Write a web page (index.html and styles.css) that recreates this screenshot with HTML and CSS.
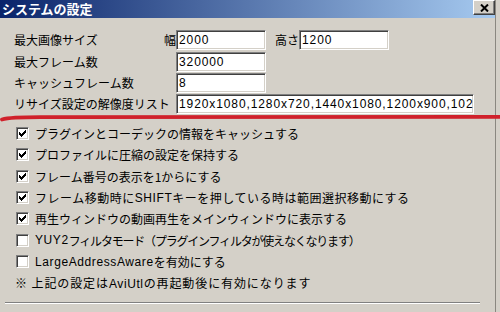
FILE: index.html
```html
<!DOCTYPE html>
<html lang="ja">
<head>
<meta charset="utf-8">
<title>システムの設定</title>
<link rel="stylesheet" href="styles.css">
</head>
<body>
<div class="screen">
  <div class="window">
    <div class="titlebar">
      <span class="title">システムの設定</span>
      <span class="close"><svg width="9" height="8" viewBox="0 0 9 8"><path d="M1 0.5 L8 7.5 M8 0.5 L1 7.5" stroke="#000" stroke-width="2" fill="none"/></svg></span>
    </div>
    <div class="content">
      <div class="fields">
        <div class="row first">
          <span class="label short">最大画像サイズ</span><span class="unit">幅</span><span class="edit">2000</span>
          <span class="unit2">高さ</span><span class="edit">1200</span>
        </div>
        <div class="row"><span class="label">最大フレーム数</span><span class="edit">320000</span></div>
        <div class="row"><span class="label">キャッシュフレーム数</span><span class="edit">8</span></div>
        <div class="row"><span class="label">リサイズ設定の解像度リスト</span><span class="edit wide">1920x1080,1280x720,1440x1080,1200x900,1024x768</span></div>
      </div>
      <ul class="checks">
        <li class="check on"><span class="box"><svg width="13" height="13" viewBox="0 0 13 13"><path d="M3 5H4V6H5V7H6V6H7V5H8V4H9V3H10V6H9V7H8V8H7V9H6V10H5V9H4V8H3Z" fill="#000"/></svg></span>プラグインとコーデックの情報をキャッシュする</li>
        <li class="check on"><span class="box"><svg width="13" height="13" viewBox="0 0 13 13"><path d="M3 5H4V6H5V7H6V6H7V5H8V4H9V3H10V6H9V7H8V8H7V9H6V10H5V9H4V8H3Z" fill="#000"/></svg></span>プロファイルに圧縮の設定を保持する</li>
        <li class="check on"><span class="box"><svg width="13" height="13" viewBox="0 0 13 13"><path d="M3 5H4V6H5V7H6V6H7V5H8V4H9V3H10V6H9V7H8V8H7V9H6V10H5V9H4V8H3Z" fill="#000"/></svg></span>フレーム番号の表示を1からにする</li>
        <li class="check on wide-text"><span class="box"><svg width="13" height="13" viewBox="0 0 13 13"><path d="M3 5H4V6H5V7H6V6H7V5H8V4H9V3H10V6H9V7H8V8H7V9H6V10H5V9H4V8H3Z" fill="#000"/></svg></span>フレーム移動時に<span class="lat">SHIFT</span>キーを押している時は範囲選択移動にする</li>
        <li class="check on"><span class="box"><svg width="13" height="13" viewBox="0 0 13 13"><path d="M3 5H4V6H5V7H6V6H7V5H8V4H9V3H10V6H9V7H8V8H7V9H6V10H5V9H4V8H3Z" fill="#000"/></svg></span>再生ウィンドウの動画再生をメインウィンドウに表示する</li>
        <li class="check narrow-text"><span class="box"></span><span class="lat">YUY2</span>フィルタモード（プラグインフィルタが使えなくなります）</li>
        <li class="check"><span class="box"></span><span class="lat">LargeAddressAware</span>を有効にする</li>
      </ul>
      <p class="note">※ 上記の設定は<span class="lat">AviUtl</span>の再起動後に有効になります</p>
      <div class="separator"></div>
    </div>
  </div>
  <svg class="redline" width="500" height="312" viewBox="0 0 500 312"><path d="M2 119.5 C 8 117.8, 20 117.2, 40 117.2 L 500 116.8" stroke="#d0212b" stroke-width="3.8" fill="none" stroke-linecap="round"/></svg>
</div>
</body>
</html>
```
FILE: styles.css
```css
html, body {
  margin: 0;
  padding: 0;
}
body {
  background: #d4d0c8;
  font-family: "Noto Sans CJK JP", "Liberation Sans", sans-serif;
  font-size: 12px;
  color: #000;
}
.screen {
  position: relative;
  width: 500px;
  height: 312px;
  overflow: hidden;
}
.window {
  width: 495px;
  height: 312px;
  background: #d4d0c8;
  border-right: 1px solid #8a8780;
}
.titlebar {
  height: 18px;
  background: linear-gradient(to right, #0a246a, #a6caf0);
  display: flex;
  justify-content: space-between;
  align-items: flex-start;
}
.title {
  color: #fff;
  font-weight: 700;
  font-size: 13px;
  line-height: 18px;
  padding-left: 2px;
}
.close {
  width: 22px;
  height: 15px;
  box-sizing: border-box;
  background: #d4d0c8;
  border: 1px solid;
  border-color: #fff #404040 #404040 #fff;
  box-shadow: inset -1px -1px #808080;
  display: flex;
  align-items: center;
  justify-content: center;
}
.close svg {
  display: block;
}
.content {
  padding: 12px 0 0 14px;
}
.row {
  display: flex;
  align-items: flex-start;
  height: 21px;
}
.row.first {
  height: 22px;
}
.label {
  width: 162px;
  line-height: 20px;
  white-space: nowrap;
}
.label.short {
  width: 148px;
}
.unit {
  width: 14px;
  text-align: right;
  line-height: 20px;
}
.unit2 {
  margin-left: 9px;
  width: 24px;
  line-height: 20px;
}
.edit {
  width: 90px;
  height: 20px;
  box-sizing: border-box;
  background: #fff;
  border: 1px solid;
  border-color: #808080 #fff #fff #808080;
  box-shadow: inset 1px 1px #404040, inset -1px -1px #d4d0c8;
  padding-left: 2px;
  font-family: "Liberation Sans", sans-serif;
  font-size: 12px;
  letter-spacing: 0.9px;
  line-height: 18px;
  white-space: nowrap;
  overflow: hidden;
}
.edit.wide {
  width: 298px;
}
.checks {
  list-style: none;
  margin: 8px 0 0 0;
  padding: 0;
}
.check {
  display: flex;
  align-items: center;
  height: 21.33px;
  padding-left: 2px;
  white-space: nowrap;
}
.check.wide-text {
  letter-spacing: 0.5px;
}
.check.narrow-text {
  letter-spacing: -1.2px;
}
.box {
  width: 13px;
  height: 13px;
  box-sizing: border-box;
  background: #fff;
  border: 1px solid;
  border-color: #808080 #fff #fff #808080;
  box-shadow: inset 1px 1px #404040, inset -1px -1px #d4d0c8;
  margin-right: 6px;
  flex: none;
}
.box svg {
  display: block;
  margin: -1px 0 0 -1px;
}
.lat {
  font-family: "Liberation Sans", sans-serif;
  font-size: 12px;
  letter-spacing: 0.6px;
}
.note {
  margin: 0 0 0 1px;
  height: 21.33px;
  line-height: 21px;
  white-space: nowrap;
  letter-spacing: 0.9px;
}
.separator {
  margin: 8px 0 0 -9px;
  width: 475px;
  border-top: 1px solid #808080;
  border-bottom: 1px solid #fff;
}
.redline {
  position: absolute;
  left: 0;
  top: 0;
  pointer-events: none;
}
```
